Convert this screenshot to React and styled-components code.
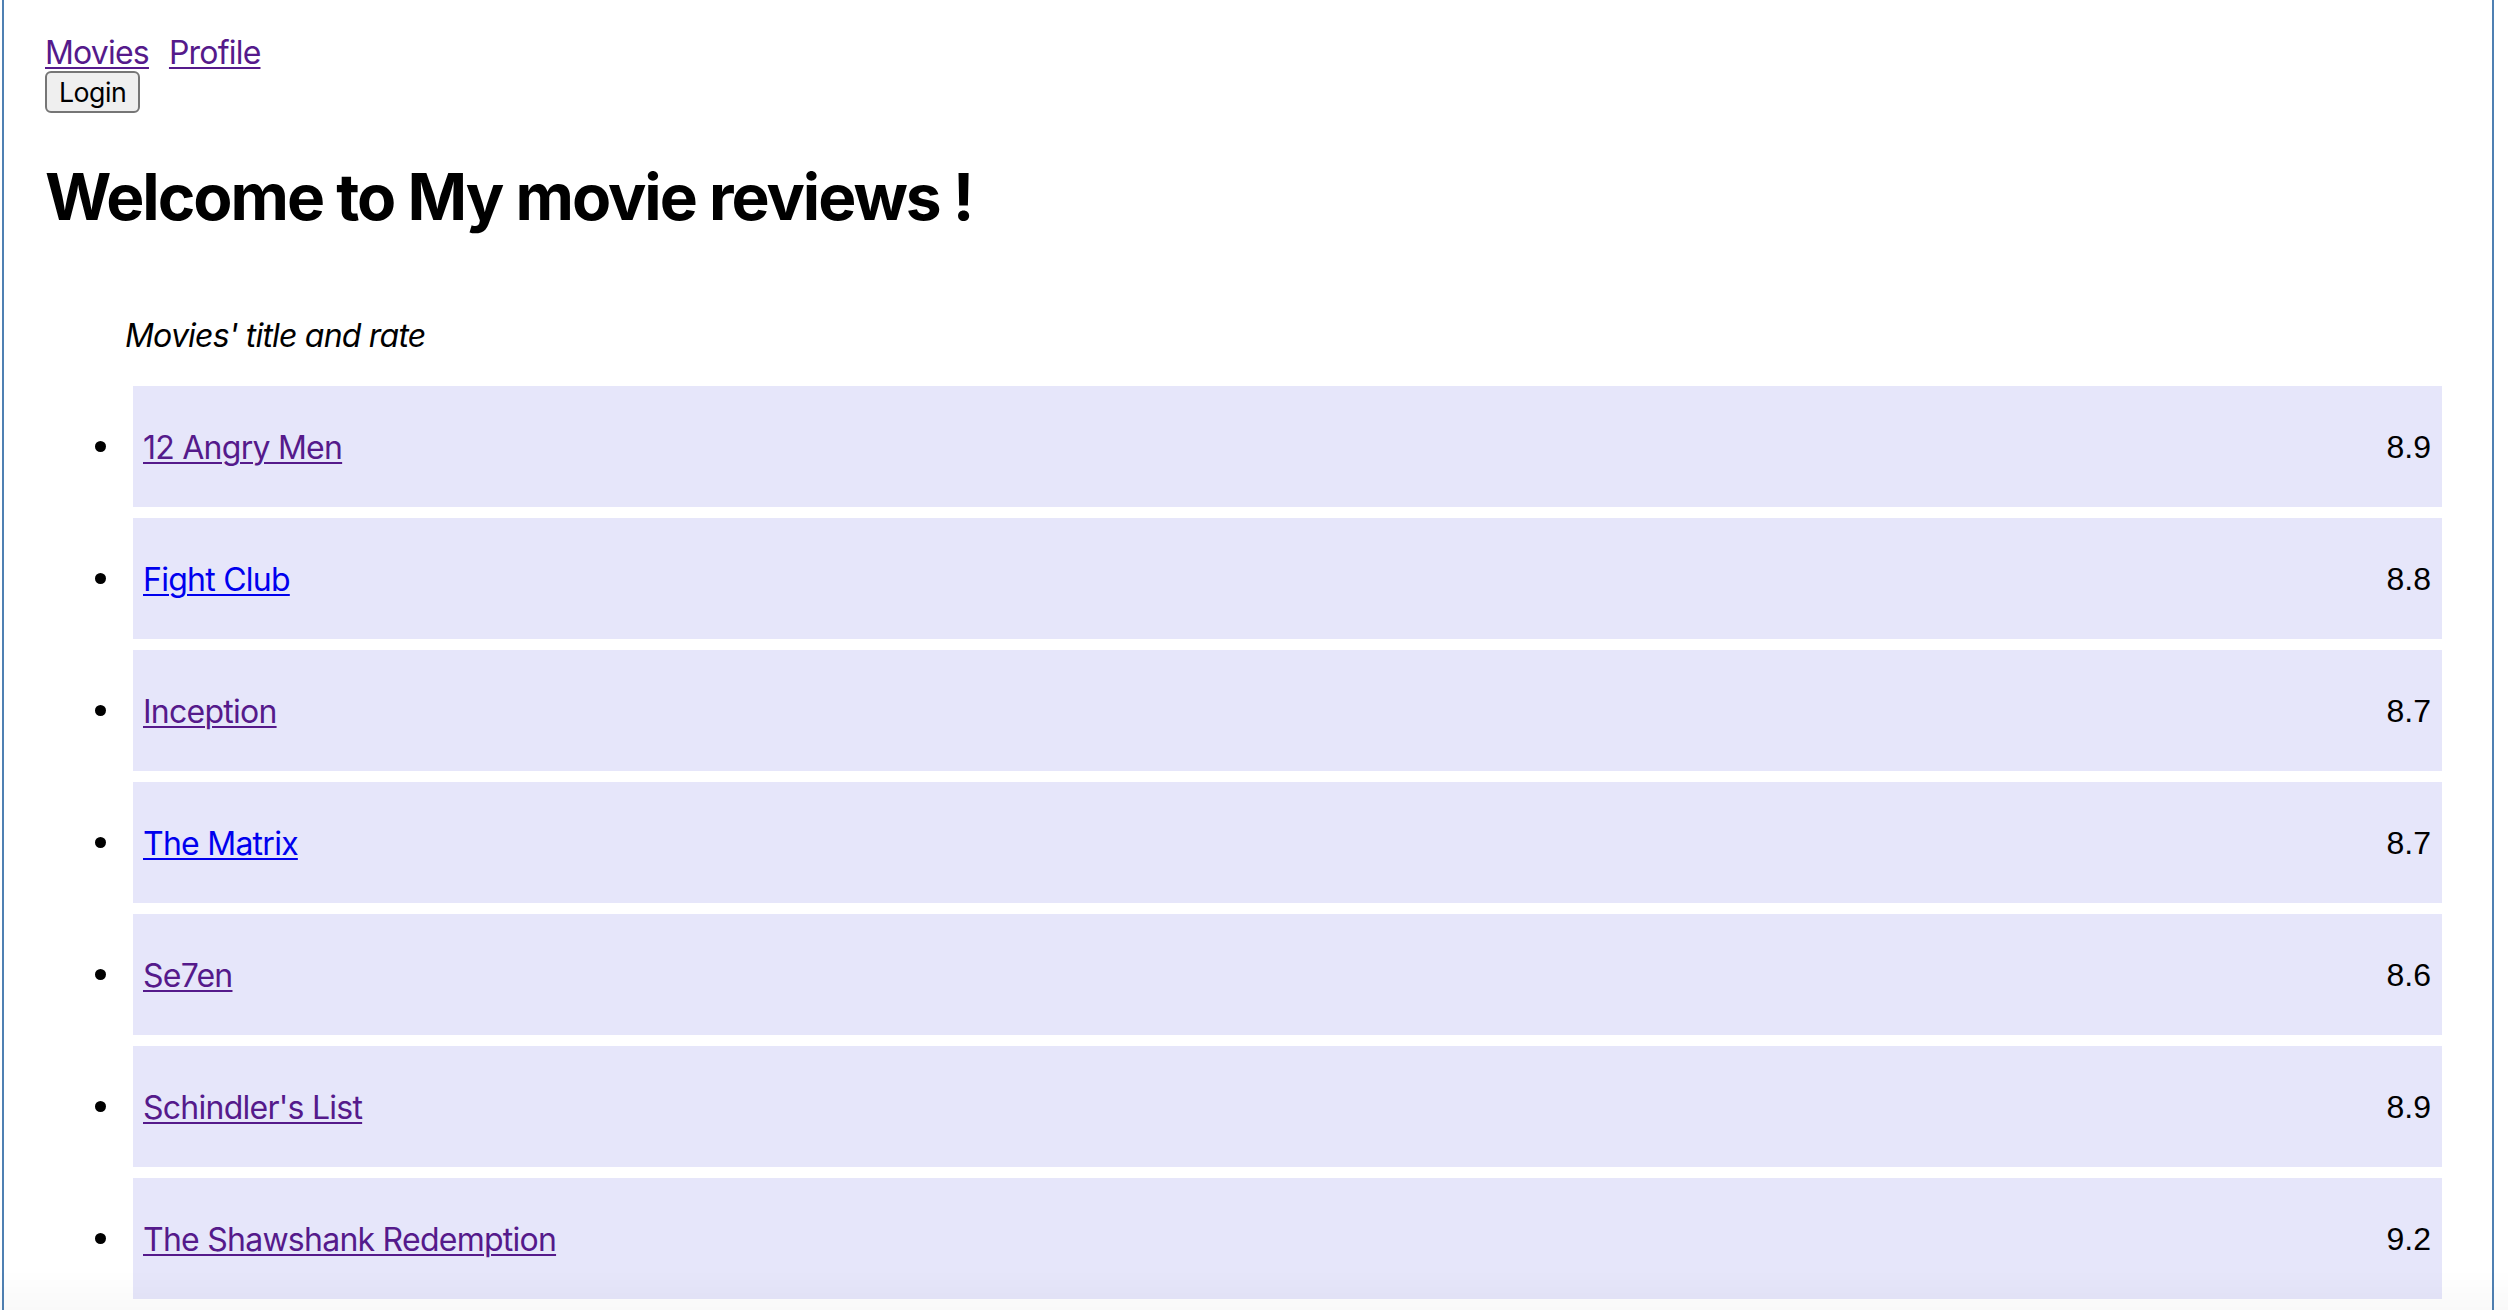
import React from 'react';
import styled, {createGlobalStyle} from 'styled-components';

const GlobalStyle = createGlobalStyle`
  html, body {
    margin: 0;
    padding: 0;
    background: #ffffff;
  }
  body {
    font-family: Inter, "Noto Sans", "Liberation Sans", sans-serif;
    color: #000000;
    overflow: hidden;
  }
`;

let Frame = styled.div`
  box-sizing: border-box;
  width: 2492px;
  min-height: 1310px;
  margin-left: 2px;
  border-left: 2px solid #4f80b3;
  border-right: 2px solid #4f80b3;
  padding: 33px 50px 0 41px;
`;

let Nav = styled.nav`
  display: flex;
  gap: 20px;
  font-size: 32px;
  line-height: normal;
  letter-spacing: -0.8px;
`;

let NavLink = styled.a`
  color: #551a8b;
  text-decoration: underline;
  text-decoration-thickness: 2px;
  text-underline-offset: 3px;
`;

let LoginButton = styled.button`
  display: block;
  box-sizing: border-box;
  height: 42px;
  margin: -1px 0 0 0;
  padding: 0 12px;
  font-family: Inter, "Liberation Sans", sans-serif;
  font-size: 26.7px;
  letter-spacing: -0.5px;
  color: #000000;
  background: #efefef;
  border: 2px solid #767676;
  border-radius: 6px;
`;

let Heading = styled.h1`
  margin: 45px 0 0 0;
  font-size: 64px;
  font-weight: 700;
  line-height: normal;
  letter-spacing: -2px;
`;

let Caption = styled.p`
  margin: 81px 0 0 0;
  padding-left: 80px;
  font-size: 32px;
  font-style: italic;
  line-height: normal;
  letter-spacing: -0.8px;
`;

let MovieList = styled.ul`
  list-style: none;
  margin: 31px 0 0 0;
  padding: 0;
  display: flex;
  flex-direction: column;
  gap: 11px;
`;

let Row = styled.li`
  display: flex;
  align-items: center;
`;

let Dot = styled.span`
  flex: none;
  width: 11px;
  height: 11px;
  margin: 0 27px 0 50px;
  border-radius: 50%;
  background: #000000;
`;

let Card = styled.div`
  flex: 1;
  box-sizing: border-box;
  height: 121px;
  display: flex;
  align-items: center;
  justify-content: space-between;
  padding: 2px 11px 0 10px;
  background: lavender;
`;

let Title = styled.a`
  font-size: 32px;
  line-height: normal;
  letter-spacing: -0.75px;
  color: ${props => props.visited ? '#551a8b' : '#0000ee'};
  text-decoration: underline;
  text-decoration-thickness: 2px;
  text-underline-offset: 3px;
`;

let Rate = styled.span`
  font-family: "Liberation Sans", Arial, sans-serif;
  font-size: 32px;
  line-height: normal;
`;

let BottomShade = styled.div`
  position: fixed;
  left: 0;
  right: 0;
  bottom: 0;
  height: 40px;
  pointer-events: none;
  background: linear-gradient(to bottom, rgba(0,0,0,0), rgba(0,0,0,0.025));
`;

const movies = [
  {title: '12 Angry Men', rate: '8.9', visited: true},
  {title: 'Fight Club', rate: '8.8', visited: false},
  {title: 'Inception', rate: '8.7', visited: true},
  {title: 'The Matrix', rate: '8.7', visited: false},
  {title: 'Se7en', rate: '8.6', visited: true},
  {title: "Schindler's List", rate: '8.9', visited: true},
  {title: 'The Shawshank Redemption', rate: '9.2', visited: true},
];

function App(){
  return(
    <>
      <GlobalStyle />
      <Frame>
        <Nav>
          <NavLink href="#movies">Movies</NavLink>
          <NavLink href="#profile">Profile</NavLink>
        </Nav>
        <LoginButton>Login</LoginButton>
        <Heading>Welcome to My movie reviews !</Heading>
        <Caption>Movies' title and rate</Caption>
        <MovieList>
          {
            movies.map((movie, i) => (
              <Row key={i}>
                <Dot />
                <Card>
                  <Title href="#movie" visited={movie.visited}>{movie.title}</Title>
                  <Rate>{movie.rate}</Rate>
                </Card>
              </Row>
            ))
          }
        </MovieList>
      </Frame>
      <BottomShade />
    </>
  )
}

export default App;
